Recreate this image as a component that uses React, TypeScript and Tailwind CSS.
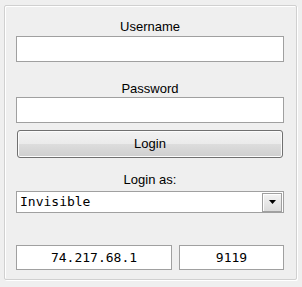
import React from "react";

const sans = { fontFamily: '"Liberation Sans", Arial, sans-serif' };
const mono = { fontFamily: '"DejaVu Sans Mono", monospace' };

export default function App() {
  return (
    <div className="w-[302px] h-[287px] bg-[#efefef] pt-[5px] pl-[4px] overflow-hidden" style={sans}>
      <div className="w-[293px] h-[275px] border border-[#d0d0d0] rounded-[2px] shadow-[inset_1px_1px_0_#ffffff,1px_1px_0_#ffffff] pl-[11px] pr-[12px] flex flex-col text-[13px] leading-[16px] text-black">
        <div className="mt-[13px] h-[16px] text-center">Username</div>
        <div className="mt-[1px] h-[26px] bg-white border border-[#a0a0a0]" />
        <div className="mt-[19px] h-[16px] text-center">Password</div>
        <div className="h-[26px] bg-white border border-[#a0a0a0]" />
        <div className="mt-[7px] mx-[1px] h-[28px] rounded-[3px] border border-[#707070] bg-[linear-gradient(to_bottom,#f2f2f2_0%,#ebebeb_50%,#dddddd_50%,#cfcfcf_100%)] shadow-[inset_0_0_0_1px_#fcfcfc] flex items-center justify-center">
          Login
        </div>
        <div className="mt-[14px] h-[16px] text-center">Login as:</div>
        <div className="mt-[3px] h-[22px] bg-white border border-[#a0a0a0] flex items-center justify-between pl-[3px] pr-[1px]" style={mono}>
          <span className="text-[13px] leading-[16px]">Invisible</span>
          <div className="w-[20px] h-[19px] border border-[#a0a0a0] shadow-[inset_1px_1px_0_#ffffff] bg-[linear-gradient(to_bottom,#f4f4f4,#dcdcdc)] flex items-center justify-center">
            <svg width="7" height="4" viewBox="0 0 7 4">
              <path d="M0 0H7L3.5 4Z" fill="#000" />
            </svg>
          </div>
        </div>
        <div className="mt-[32px] flex gap-[7px]" style={mono}>
          <div className="w-[156px] h-[25px] bg-white border border-[#a0a0a0] flex items-center justify-center text-[13px]">
            74.217.68.1
          </div>
          <div className="flex-1 h-[25px] bg-white border border-[#a0a0a0] flex items-center justify-center text-[13px]">
            9119
          </div>
        </div>
      </div>
    </div>
  );
}
